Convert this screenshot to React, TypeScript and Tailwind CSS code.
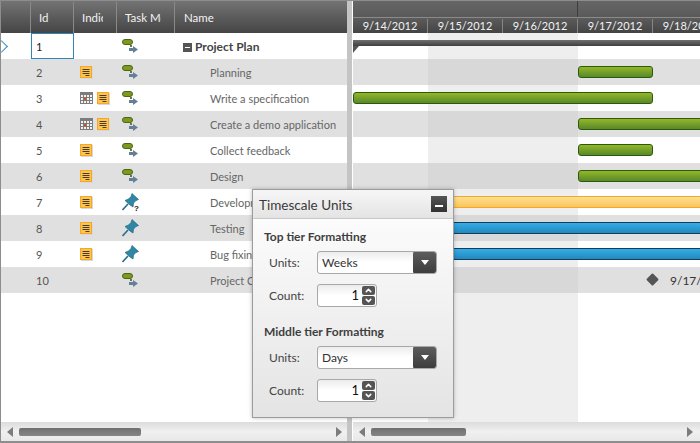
import { ChevronDown, ChevronUp } from "lucide-react";

const rows = [
  { id: 1, name: "Project Plan", notes: false, cal: false, mode: "auto", bold: true },
  { id: 2, name: "Planning", notes: true, cal: false, mode: "auto" },
  { id: 3, name: "Write a specification", notes: true, cal: true, mode: "auto" },
  { id: 4, name: "Create a demo application", notes: true, cal: true, mode: "auto" },
  { id: 5, name: "Collect feedback", notes: true, cal: false, mode: "auto" },
  { id: 6, name: "Design", notes: true, cal: false, mode: "auto" },
  { id: 7, name: "Development", notes: true, cal: false, mode: "pinq" },
  { id: 8, name: "Testing", notes: true, cal: false, mode: "pin" },
  { id: 9, name: "Bug fixing", notes: true, cal: false, mode: "pin" },
  { id: 10, name: "Project Complete", notes: false, cal: false, mode: "auto" },
];

const dates = ["9/14/2012", "9/15/2012", "9/16/2012", "9/17/2012", "9/18/2012"];

function NotesIcon() {
  return (
    <svg width="13" height="13" viewBox="0 0 13 13" className="shrink-0">
      <rect x="1" y="1" width="12" height="12" fill="#d8d8d8" />
      <rect x="0.5" y="0.5" width="11" height="11" fill="#fdc453" stroke="#f7a823" />
      <path d="M2.5 3.5h7M2.5 5.5h7M2.5 7.5h7M5.5 9.5h4" stroke="#4a3c20" strokeWidth="1" />
    </svg>
  );
}

function CalendarIcon() {
  return (
    <svg width="13" height="13" viewBox="0 0 13 13" className="shrink-0">
      <rect x="0" y="0" width="13" height="12" fill="#7c7c7c" />
      <path d="M1 3h2v2H1zM4 3h2v2H4zM7 3h2v2H7zM10 3h2v2h-2zM1 6h2v2H1zM7 6h2v2H7zM10 6h2v2h-2zM1 9h2v2H1zM4 9h2v2H4zM7 9h2v2H7zM10 9h2v2h-2z" fill="#f2f2f2" />
      <rect x="4" y="6" width="2" height="2" fill="#e2500f" />
    </svg>
  );
}

function AutoIcon() {
  return (
    <svg width="16" height="14" viewBox="0 0 16 14">
      <rect x="0.5" y="0.5" width="10" height="5" rx="2.5" fill="#7c9a20" stroke="#4f6414" />
      <path d="M8 6h2v2H8z" fill="#6b7a3a" />
      <path d="M7 9h4V7l5 3.5-5 3.5v-2H7z" fill="#657f96" />
    </svg>
  );
}

function PinIcon({ question }: { question?: boolean }) {
  return (
    <svg width="18" height="18" viewBox="0 0 18 18">
      <path d="M0.5 17L6 11" stroke="#2f6d85" strokeWidth="1.6" />
      <path d="M10 0.5L16.5 6.5L14 7.5L11.5 10L11 14L8 12L3 7.5L6.5 6L9 3.5Z" fill="#2f86a5" stroke="#246a85" strokeWidth="0.7" />
      {question && (
        <text x="12" y="17.5" fontSize="8" fontWeight="700" fontFamily="'Liberation Sans', sans-serif" fill="#111">
          ?
        </text>
      )}
    </svg>
  );
}

function ModeIcon({ mode }: { mode: string }) {
  if (mode === "auto") return <AutoIcon />;
  return <PinIcon question={mode === "pinq"} />;
}

function ScrollBar({ className, thumb, arrow }: { className: string; thumb: string; arrow: string }) {
  return (
    <div className={`flex h-[19px] items-center bg-gradient-to-b from-[#dcdcdc] via-[#f0f0f0] to-[#e8e8e8] ${className}`}>
      <span className="ml-[6px] h-0 w-0 border-y-[5px] border-r-[6px] border-y-transparent border-r-[#7c7c7c]" />
      <div className={`ml-[6px] h-[8px] rounded-[2px] bg-gradient-to-b from-[#6f6f6f] to-[#858585] ${thumb}`} />
      <span className={`ml-auto h-0 w-0 border-y-[5px] border-l-[6px] border-y-transparent border-l-[#7c7c7c] ${arrow}`} />
    </div>
  );
}

function UnitsBlock({ title, units }: { title: string; units: string }) {
  return (
    <div>
      <div className="text-[12px] leading-[14px] font-bold text-[#3f3f3f]">{title}</div>
      <div className="mt-[7px] flex items-center pl-[5px]">
        <span className="w-[48px] text-[12px] text-[#444]">Units:</span>
        <div className="flex h-[23px] w-[120px] items-center overflow-hidden rounded-[3px] border border-[#a8a8a8] bg-gradient-to-b from-[#ececec] via-white to-white">
          <span className="flex-1 pl-[4px] text-[12px] text-[#333]">{units}</span>
          <span className="flex h-[23px] w-[23px] items-center justify-center rounded-[3px] bg-gradient-to-b from-[#5e5e5e] to-[#3c3c3c]">
            <span className="h-0 w-0 border-x-[4px] border-t-[5px] border-x-transparent border-t-white" />
          </span>
        </div>
      </div>
      <div className="mt-[10px] flex items-center pl-[5px]">
        <span className="w-[48px] text-[12px] text-[#444]">Count:</span>
        <div className="flex h-[23px] w-[60px] items-center rounded-[3px] border border-[#a8a8a8] bg-gradient-to-b from-[#ececec] via-white to-white">
          <span className="flex-1 pr-[3px] text-right text-[13px] text-[#111]">1</span>
          <div className="mr-[1px] flex flex-col gap-px">
            <span className="flex h-[9px] w-[13px] items-center justify-center rounded-[2px] bg-[#555]">
              <ChevronUp size={9} strokeWidth={4} color="#fff" />
            </span>
            <span className="flex h-[9px] w-[13px] items-center justify-center rounded-[2px] bg-[#555]">
              <ChevronDown size={9} strokeWidth={4} color="#fff" />
            </span>
          </div>
        </div>
      </div>
    </div>
  );
}

export default function App() {
  return (
    <div className="relative flex h-[443px] w-[700px] flex-col overflow-hidden border-t border-b-2 border-l border-[#8d8d8d] bg-white font-['Lato','Open_Sans',sans-serif] text-[11px] text-[#555]">
      <div className="flex min-h-0 flex-1">
        {/* grid side */}
        <div className="flex w-[346px] shrink-0 flex-col">
          <div className="flex h-[32px] shrink-0 items-center bg-gradient-to-b from-[#747474] to-[#454545] pt-px text-[11.5px] text-[#f2f2f2]">
            <div className="h-full w-[30px] shrink-0 border-r border-[#8a8a8a]" />
            <div className="flex h-full w-[43px] shrink-0 items-center border-r border-[#8a8a8a] pl-[8px]">Id</div>
            <div className="flex h-full w-[43px] shrink-0 items-center overflow-hidden border-r border-[#8a8a8a] pl-[8px] whitespace-nowrap">
              <span className="w-[21px] overflow-hidden">Indicators</span>
            </div>
            <div className="flex h-full w-[58px] shrink-0 items-center overflow-hidden border-r border-[#8a8a8a] pl-[8px] whitespace-nowrap">
              <span className="w-[36px] overflow-hidden">Task Mode</span>
            </div>
            <div className="pl-[9px]">Name</div>
          </div>
          {rows.map((row, i) => (
            <div key={row.id} className={`flex h-[26px] shrink-0 items-center overflow-hidden ${i % 2 ? "bg-[#e0e0e0]" : "bg-white"}`}>
              <div className="relative h-full w-[30px] shrink-0">
                {i === 0 && (
                  <span className="absolute top-[9px] left-[-4px] h-[9px] w-[9px] rotate-45 border-t border-r border-[#2f8ab8]" />
                )}
              </div>
              <div className={`flex h-full w-[43px] shrink-0 items-center pt-[2px] ${i === 0 ? "border border-[#2f86b4] pl-[4px] text-[#222]" : "pl-[5px]"}`}>
                {row.id}
              </div>
              <div className="flex h-full w-[43px] shrink-0 items-center gap-[4px] pl-[6px]">
                {row.cal && <CalendarIcon />}
                {row.notes && <NotesIcon />}
              </div>
              <div className="flex h-full w-[58px] shrink-0 items-center pl-[5px]">
                <ModeIcon mode={row.mode} />
              </div>
              {row.bold ? (
                <div className="flex items-center pt-[2px] pl-[8px] text-[12px] font-bold text-[#444]">
                  <span className="mr-[3px] flex h-[9px] w-[9px] items-center justify-center bg-[#555]">
                    <span className="h-px w-[5px] bg-white" />
                  </span>
                  {row.name}
                </div>
              ) : (
                <div className="pt-[2px] pl-[35px] whitespace-nowrap text-[#666]">{row.name}</div>
              )}
            </div>
          ))}
        </div>

        <div className="w-[6px] shrink-0 border-r border-white bg-[#c4c4c4]" />

        {/* gantt side */}
        <div className="relative flex min-w-0 flex-1 flex-col overflow-hidden">
          <div className="flex h-[16px] shrink-0 bg-gradient-to-b from-[#666] to-[#5a5a5a]">
            <div className="w-[225px] border-r border-[#3f3f3f]" />
          </div>
          <div className="flex h-[16px] shrink-0 border-t border-[#8a8a8a] bg-gradient-to-b from-[#5c5c5c] to-[#444] pt-px text-[11px] text-[#f2f2f2]">
            {dates.map((d) => (
              <div key={d} className="flex h-full w-[75px] shrink-0 items-center justify-center border-r border-[#858585] whitespace-nowrap">
                {d}
              </div>
            ))}
          </div>
          {rows.map((row, i) => (
            <div key={row.id} className={`flex h-[26px] shrink-0 ${i % 2 ? "bg-[#e0e0e0]" : "bg-white"}`}>
              <div className="w-[75px]" />
              <div className={`w-[150px] ${i % 2 ? "bg-[#d8d8d8]" : "bg-[#eeeeee]"}`} />
            </div>
          ))}
          <div className="flex flex-1">
            <div className="w-[75px]" />
            <div className="w-[150px] bg-[#eeeeee]" />
          </div>
          <div className="absolute top-[39px] left-0 h-[6px] w-full bg-gradient-to-b from-[#707070] to-[#3f3f3f]" />
          <div className="absolute top-[45px] left-0 h-0 w-0 border-t-[7px] border-r-[6px] border-t-[#555] border-r-transparent" />
          <div className="absolute top-[65px] left-[225px] h-[12px] w-[75px] rounded-[3px] border border-[#2c5a0c] bg-gradient-to-b from-[#94b728] to-[#58882a]" />
          <div className="absolute top-[91px] left-0 h-[12px] w-[300px] rounded-[3px] border border-[#2c5a0c] bg-gradient-to-b from-[#94b728] to-[#58882a]" />
          <div className="absolute top-[117px] left-[225px] h-[12px] w-[200px] rounded-[3px] border border-[#2c5a0c] bg-gradient-to-b from-[#94b728] to-[#58882a]" />
          <div className="absolute top-[143px] left-[225px] h-[12px] w-[75px] rounded-[3px] border border-[#2c5a0c] bg-gradient-to-b from-[#94b728] to-[#58882a]" />
          <div className="absolute top-[169px] left-[225px] h-[12px] w-[200px] rounded-[3px] border border-[#2c5a0c] bg-gradient-to-b from-[#94b728] to-[#58882a]" />
          <div className="absolute top-[195px] left-[50px] h-[12px] w-[400px] border border-[#f0a92a] bg-gradient-to-b from-[#fde08f] to-[#fbc45a]" />
          <div className="absolute top-[221px] left-[50px] h-[12px] w-[400px] border border-[#123e5c] bg-gradient-to-b from-[#35ade6] to-[#2388bd]" />
          <div className="absolute top-[247px] left-[50px] h-[12px] w-[400px] border border-[#123e5c] bg-gradient-to-b from-[#35ade6] to-[#2388bd]" />
          <div className="absolute top-[274px] left-[295px] h-[9px] w-[9px] rotate-45 rounded-[1px] bg-[#555]" />
          <div className="absolute top-[271px] left-[317px] text-[12px] whitespace-nowrap text-[#333]">9/17/2012</div>
        </div>
      </div>

      {/* scrollbars */}
      <div className="flex shrink-0">
        <ScrollBar className="w-[346px]" thumb="w-[122px]" arrow="mr-[5px]" />
        <div className="w-[6px] shrink-0 border-r border-white bg-[#c4c4c4]" />
        <ScrollBar className="flex-1" thumb="w-[95px]" arrow="mr-[7px]" />
      </div>

      {/* dialog */}
      <div className="absolute top-[188px] left-[251px] w-[202px] border border-[#9c9c9c] bg-gradient-to-b from-white to-[#e4e4e4] shadow-[0_0_4px_rgba(0,0,0,0.25)]">
        <div className="flex h-[29px] items-center justify-between border-b border-[#c8c8c8] bg-gradient-to-b from-[#f6f6f6] to-[#e4e4e4] px-[6px]">
          <span className="pt-[2px] text-[13.5px] text-[#3a3a3a]">Timescale Units</span>
          <span className="flex h-[16px] w-[16px] items-center justify-center bg-gradient-to-b from-[#555] to-[#333]">
            <span className="mt-[3px] h-[2px] w-[8px] bg-white" />
          </span>
        </div>
        <div className="flex flex-col gap-[18px] px-[11px] pt-[11px] pb-[15px]">
          <UnitsBlock title="Top tier Formatting" units="Weeks" />
          <UnitsBlock title="Middle tier Formatting" units="Days" />
        </div>
      </div>
    </div>
  );
}
